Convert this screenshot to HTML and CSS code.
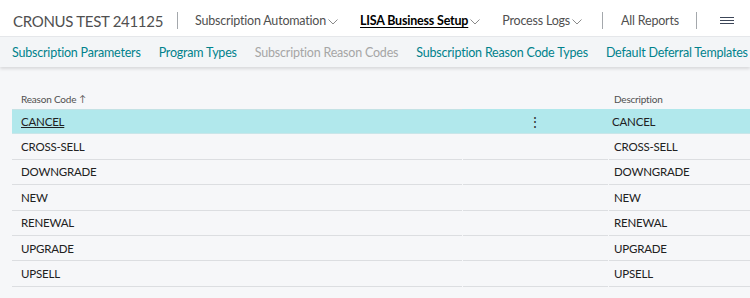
FILE: index.html
```html
<!DOCTYPE html>
<html lang="en">
<head>
<meta charset="UTF-8">
<meta name="viewport" content="width=device-width, initial-scale=1.0">
<title>Subscription Reason Codes</title>
<link rel="stylesheet" href="styles.css">
</head>
<body>

<header class="topbar">
    <span class="company">CRONUS TEST 241125</span>
    <span class="sep first"></span>
    <a class="menu">Subscription Automation<svg class="chev" viewBox="0 0 10 6"><path d="M0.5 0.5 L5 5 L9.5 0.5"/></svg></a>
    <a class="menu active">LISA Business Setup<svg class="chev" viewBox="0 0 10 6"><path d="M0.5 0.5 L5 5 L9.5 0.5"/></svg></a>
    <a class="menu">Process Logs<svg class="chev" viewBox="0 0 10 6"><path d="M0.5 0.5 L5 5 L9.5 0.5"/></svg></a>
    <span class="sep"></span>
    <a class="menu">All Reports</a>
    <span class="sep last"></span>
    <svg class="burger" viewBox="0 0 14 7"><path d="M0 0.5 H14 M0 3.5 H14 M0 6.5 H14"/></svg>
</header>

<nav class="subnav">
    <a>Subscription Parameters</a>
    <a>Program Types</a>
    <a class="disabled">Subscription Reason Codes</a>
    <a>Subscription Reason Code Types</a>
    <a>Default Deferral Templates</a>
</nav>

<main class="list">
    <div class="row head">
        <div class="c1">Reason Code <span class="arrow">&#8593;</span></div>
        <div class="c2"></div>
        <div class="c3">Description</div>
    </div>
    <div class="row selected">
        <div class="c1"><u>CANCEL</u></div>
        <div class="c2"><span class="dots">&#8942;</span></div>
        <div class="c3">CANCEL</div>
    </div>
    <div class="row"><div class="c1">CROSS-SELL</div><div class="c2"></div><div class="c3">CROSS-SELL</div></div>
    <div class="row"><div class="c1">DOWNGRADE</div><div class="c2"></div><div class="c3">DOWNGRADE</div></div>
    <div class="row"><div class="c1">NEW</div><div class="c2"></div><div class="c3">NEW</div></div>
    <div class="row"><div class="c1">RENEWAL</div><div class="c2"></div><div class="c3">RENEWAL</div></div>
    <div class="row"><div class="c1">UPGRADE</div><div class="c2"></div><div class="c3">UPGRADE</div></div>
    <div class="row"><div class="c1">UPSELL</div><div class="c2"></div><div class="c3">UPSELL</div></div>
</main>

</body>
</html>
```

FILE: styles.css
```css
/* Business Central style list page */
body {
    margin: 0;
    font-family: Lato, "Open Sans", sans-serif;
    background: #f6f7f9;
    color: #212121;
    overflow: hidden;
}
.topbar {
    height: 37px;
    background: #fff;
    border-bottom: 1px solid #e6e8eb;
    display: flex;
    align-items: center;
    padding: 5px 0 0 13px;
    box-sizing: border-box;
    white-space: nowrap;
}
.topbar > * {
    flex-shrink: 0;
}
.company {
    font-size: 15px;
    color: #505050;
    letter-spacing: -0.3px;
}
.sep {
    width: 1px;
    height: 17px;
    background: #a4a8ac;
    margin: 0 18px 0 20px;
}
.sep.first {
    margin: 0 17px 0 14px;
}
.sep.last {
    margin: 0 23px 0 17px;
}
.menu {
    font-size: 12.5px;
    color: #505050;
    letter-spacing: -0.2px;
    display: flex;
    align-items: center;
}
.menu + .menu {
    margin-left: 22px;
}
.menu.active {
    color: #000;
    font-weight: 700;
    text-decoration: underline;
    text-underline-offset: 2px;
}
.chev {
    width: 10px;
    height: 6px;
    margin-left: 2px;
    margin-top: 2px;
    fill: none;
    stroke: #8a8a8a;
    stroke-width: 1;
}
.burger {
    width: 14px;
    height: 7px;
    stroke: #3c4658;
    stroke-width: 1.2;
}
.subnav {
    height: 30px;
    background: #f3f5f7;
    display: flex;
    align-items: center;
    padding-left: 12px;
    gap: 18px;
    box-shadow: 0 2px 3px rgba(0,0,0,0.12);
    white-space: nowrap;
}
.subnav a {
    font-size: 12.5px;
    letter-spacing: -0.2px;
    color: #00828c;
}
.subnav a.disabled {
    color: #a6a6a6;
}
.list {
    margin: 20px 0 0 12px;
}
.row {
    display: flex;
    height: 25.4px;
    align-items: center;
    font-size: 11.5px;
    letter-spacing: -0.2px;
}
.row > div {
    height: 100%;
    display: flex;
    align-items: center;
    box-sizing: border-box;
    border-bottom: 1px solid #dcdee1;
}
.row.head > div {
    border-bottom: none;
    font-size: 10px;
    color: #505050;
    padding-top: 1px;
}
.row.head {
    height: 22px;
}
.c1 {
    width: 450px;
    padding-left: 9px;
    margin-right: 1px;
}
.c2 {
    width: 145px;
    margin-right: 1px;
    position: relative;
}
.c3 {
    flex: 1;
    padding-left: 5px;
}
.arrow {
    font-size: 9px;
    margin-left: 3px;
}
.row.selected > div {
    background: #b1e8ec;
    margin-right: 0;
    border-bottom-color: #c9e6e9;
}
.row.selected .c1 {
    border-top: 1px solid #c4e2e5;
}
.dots {
    position: absolute;
    left: 66px;
    top: 4px;
    font-size: 14px;
    color: #333;
}
```
